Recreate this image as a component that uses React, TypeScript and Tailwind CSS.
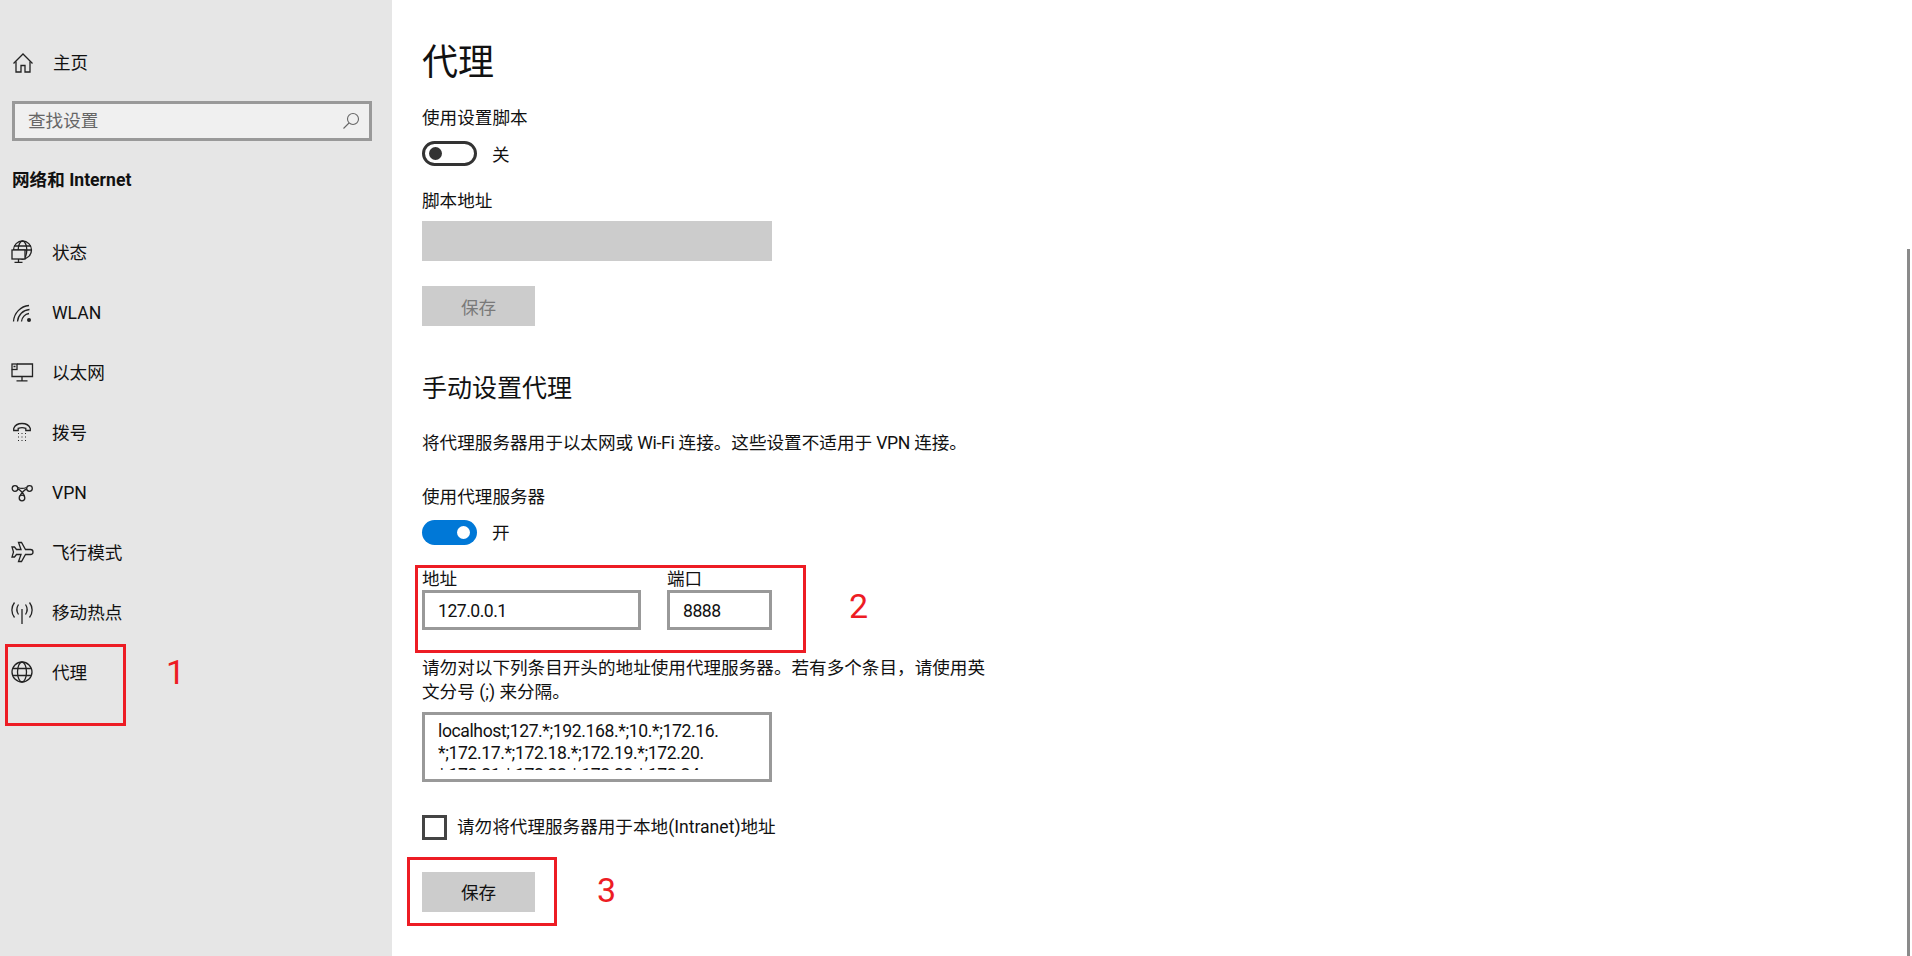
const fontStack = "font-['Roboto','Noto_Sans_CJK_SC',sans-serif]";

const navItems = [
  { label: "状态", icon: <StatusIcon /> },
  { label: "WLAN", icon: <WlanIcon /> },
  { label: "以太网", icon: <EthernetIcon /> },
  { label: "拨号", icon: <DialIcon /> },
  { label: "VPN", icon: <VpnIcon /> },
  { label: "飞行模式", icon: <PlaneIcon /> },
  { label: "移动热点", icon: <HotspotIcon /> },
  { label: "代理", icon: <GlobeIcon /> },
];

function IconBox({ children }: { children: React.ReactNode }) {
  return (
    <svg width="24" height="24" viewBox="0 0 24 24" fill="none" stroke="#222" strokeWidth="1.3" className="shrink-0">
      {children}
    </svg>
  );
}

function HomeIcon() {
  return (
    <IconBox>
      <path d="M2.500 12.500 12 3l9.500 9.500" />
      <path d="M5 10.500V21h5v-6.500h4V21h5V10.500" />
    </IconBox>
  );
}

function StatusIcon() {
  return (
    <IconBox>
      <circle cx="12.500" cy="10" r="9" />
      <ellipse cx="12.500" cy="10" rx="4.300" ry="9" />
      <path d="M4 6h17M3.500 10h18" />
      <rect x="2" y="10" width="13" height="9" fill="#e6e6e6" />
      <path d="M8.500 19v3M4.500 22.300h8" />
    </IconBox>
  );
}

function WlanIcon() {
  return (
    <IconBox>
      <path d="M3.500 21.500A17 17 0 0 1 19 5.500" />
      <path d="M7.500 21.500A13 13 0 0 1 19.500 9.500" />
      <path d="M11.500 21.500A9 9 0 0 1 19 13.500" />
      <circle cx="19" cy="20" r="2" fill="#222" stroke="none" />
    </IconBox>
  );
}

function EthernetIcon() {
  return (
    <IconBox>
      <path d="M7 4h15.500v12.500H7" />
      <path d="M2 9.500v7h5" />
      <rect x="2" y="4" width="5" height="5.500" />
      <path d="M3.500 6.500h2M12 16.500v4M6.500 20.800h11" />
    </IconBox>
  );
}

function DialIcon() {
  return (
    <IconBox>
      <path d="M3.700 10.500V8.500C5 5 8.500 3.500 12 3.500s7 1.500 8.300 5v2h-4.500V8.300c-2.500-1-5-1-7.600 0v2.200z" />
      <path d="M8 13.500h1M11.500 13.500h1M15 13.500h1M8 17h1M11.500 17h1M15 17h1M8 20.500h1M11.500 20.500h1M15 20.500h1" strokeWidth="1.200" />
    </IconBox>
  );
}

function VpnIcon() {
  return (
    <IconBox>
      <circle cx="5" cy="8.500" r="2.800" />
      <circle cx="19.500" cy="8.500" r="2.800" />
      <circle cx="12" cy="18" r="2.800" />
      <path d="M7.800 9c2 .5 6.500 5 6.500 7M16.700 9c-2 .5-6.500 5-6.500 7" />
      <path d="M8 7.500c2 1 6 1 8.500 0" />
    </IconBox>
  );
}

function PlaneIcon() {
  return (
    <IconBox>
      <path d="M8.500 2.500h3l4 7h5c1.500 0 2.500 1.200 2.500 2.500s-1 2.500-2.500 2.500h-5l-4 7h-3l2.500-7H6.500l-2 2.500H2l1.500-5L2 7h2.500l2 2.500H11z" />
    </IconBox>
  );
}

function HotspotIcon() {
  return (
    <IconBox>
      <path d="M12 9v15" />
      <path d="M8.500 4.500c-2 3-2 7 0 10M15.500 4.500c2 3 2 7 0 10" />
      <path d="M4.500 2.500c-3.500 4.500-3.500 10.500 0 15M19.500 2.500c3.500 4.500 3.500 10.500 0 15" />
    </IconBox>
  );
}

function GlobeIcon() {
  return (
    <IconBox>
      <circle cx="12" cy="12" r="10" />
      <ellipse cx="12" cy="12" rx="4.500" ry="10" />
      <path d="M3 8.500h18M3 15.500h18" />
    </IconBox>
  );
}

function SearchIcon() {
  return (
    <svg width="18" height="18" viewBox="0 0 18 18" fill="none" stroke="#666" strokeWidth="1.100">
      <circle cx="11" cy="7" r="5.500" />
      <path d="M7 11 1.500 16.500" />
    </svg>
  );
}

function Toggle({ on, label }: { on: boolean; label: string }) {
  return (
    <div className="flex h-[25px] items-center gap-[15px]">
      {on ? (
        <div className="flex h-[25px] w-[55px] items-center justify-end rounded-full bg-[#0078d7] pr-[7px]">
          <div className="size-[13px] rounded-full bg-white" />
        </div>
      ) : (
        <div className="flex h-[25px] w-[55px] items-center rounded-full border-[3px] border-[#333] pl-[4px]">
          <div className="size-[13px] rounded-full bg-[#333]" />
        </div>
      )}
      <span className={on ? "" : "pt-[2px]"}>{label}</span>
    </div>
  );
}

function TextField({ value, width }: { value: string; width: string }) {
  return (
    <div className={`flex h-[40px] items-center border-[3px] border-[#999] pl-[13px] pt-[1px] tracking-[-0.5px] ${width}`}>
      {value}
    </div>
  );
}

function Annotation({ className, children }: { className: string; children?: React.ReactNode }) {
  return <div className={`absolute ${className}`}>{children}</div>;
}

export default function App() {
  return (
    <div className={`relative flex h-[956px] w-[1912px] overflow-hidden bg-white text-[17.6px] text-[#111] ${fontStack}`}>
      <aside className="w-[392px] shrink-0 bg-[#e6e6e6] pt-[33px]">
        <div className="flex h-[60px] items-center pl-[11px]">
          <HomeIcon />
          <span className="ml-[18px]">主页</span>
        </div>
        <div className="ml-[12px] mr-[20px] mt-[8px] flex h-[40px] items-center justify-between border-[3px] border-[#999] bg-[#f0f0f0] pl-[13px] pr-[9px] text-[#666]">
          <span>查找设置</span>
          <SearchIcon />
        </div>
        <div className="mt-[27px] h-[24px] pl-[12px] leading-[24px] font-bold">网络和 Internet</div>
        <nav className="mt-[30px]">
          {navItems.map((item) => (
            <div key={item.label} className="flex h-[60px] items-center pl-[10px]">
              {item.icon}
              <span className="ml-[18px] pt-[2px]">{item.label}</span>
            </div>
          ))}
        </nav>
      </aside>

      <main className="flex-1 pl-[30px] pt-[39px] leading-[24px]">
        <h1 className="h-[48px] text-[36px] leading-[48px]">代理</h1>
        <div className="mt-[19px] h-[24px]">使用设置脚本</div>
        <div className="mt-[11px]">
          <Toggle on={false} label="关" />
        </div>
        <div className="mt-[23px] h-[24px]">脚本地址</div>
        <div className="mt-[8px] h-[40px] w-[350px] bg-[#ccc]" />
        <div className="mt-[25px] flex h-[40px] w-[113px] items-center justify-center bg-[#ccc] pt-[3px] text-[#7a7a7a]">保存</div>

        <h2 className="mt-[47px] h-[32px] text-[25px] leading-[32px]">手动设置代理</h2>
        <div className="mt-[26px] h-[24px]">
          将代理服务器用于以太网或<span className="tracking-[-0.3px]"> Wi-Fi </span>连接。这些设置不适用于<span className="tracking-[-0.3px]"> VPN </span>连接。
        </div>
        <div className="mt-[30px] h-[24px]">使用代理服务器</div>
        <div className="mt-[11px]">
          <Toggle on label="开" />
        </div>
        <div className="mt-[22px] flex gap-[26px]">
          <div>
            <div className="h-[23px] pt-[1px] leading-[23px]">地址</div>
            <TextField value="127.0.0.1" width="w-[219px]" />
          </div>
          <div>
            <div className="h-[23px] pt-[1px] leading-[23px]">端口</div>
            <TextField value="8888" width="w-[105px]" />
          </div>
        </div>
        <p className="mt-[26px] w-[570px]">请勿对以下列条目开头的地址使用代理服务器。若有多个条目，请使用英文分号 (;) 来分隔。</p>
        <div className="mt-[8px] h-[70px] w-[350px] border-[3px] border-[#999] pl-[13px] pt-[5px]">
          <div className="h-[50px] overflow-hidden whitespace-nowrap leading-[22px] tracking-[-0.4px]">
            <div>localhost;127.*;192.168.*;10.*;172.16.</div>
            <div>*;172.17.*;172.18.*;172.19.*;172.20.</div>
            <div>*;172.21.*;172.22.*;172.23.*;172.24.</div>
          </div>
        </div>
        <div className="mt-[32px] flex h-[26px] items-center gap-[10px]">
          <div className="size-[25px] border-[3px] border-[#444]" />
          <span>请勿将代理服务器用于本地(Intranet)地址</span>
        </div>
        <div className="mt-[32px] flex h-[40px] w-[113px] items-center justify-center bg-[#ccc] pt-[2px]">保存</div>
      </main>

      <div className="absolute bottom-0 right-[2px] top-[249px] w-[3px] bg-[#8a8a8a]" />

      <Annotation className="left-[5px] top-[644px] h-[82px] w-[121px] border-[3px] border-[#ed1c24]" />
      <Annotation className="left-[415px] top-[565px] h-[88px] w-[391px] border-[3px] border-[#ed1c24]" />
      <Annotation className="left-[407px] top-[857px] h-[69px] w-[150px] border-[3px] border-[#ed1c24]" />
      <Annotation className="left-[166px] top-[652px] text-[34px] leading-[40px] text-[#ed1c24]">1</Annotation>
      <Annotation className="left-[849px] top-[586px] text-[34px] leading-[40px] text-[#ed1c24]">2</Annotation>
      <Annotation className="left-[597px] top-[870px] text-[34px] leading-[40px] text-[#ed1c24]">3</Annotation>
    </div>
  );
}
